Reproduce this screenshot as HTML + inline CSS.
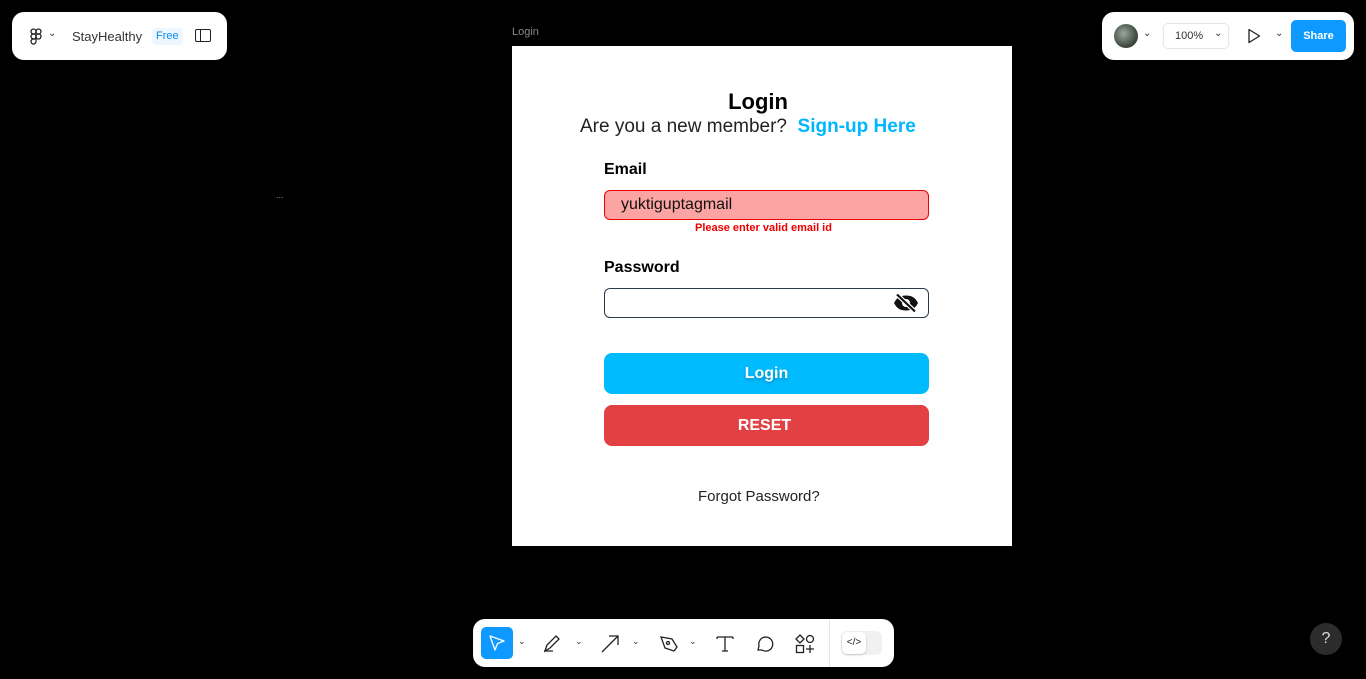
<!DOCTYPE html>
<html><head><meta charset="utf-8"><style>
*{margin:0;padding:0;box-sizing:border-box}
body{width:1366px;height:679px;background:#000;position:relative;overflow:hidden;font-family:"Liberation Sans",sans-serif}
.a{position:absolute}
.t{white-space:nowrap}
</style></head><body>
<div class="a" style="left:12px;top:12px;width:215px;height:48px;background:#fff;border-radius:12px"></div>
<svg class="a" style="left:30px;top:28px" width="12" height="17" viewBox="0 0 12 17" fill="none" stroke="#222" stroke-width="1.3"><rect x="1" y="1" width="5" height="5" rx="2.5"/><rect x="6" y="1" width="5" height="5" rx="2.5"/><rect x="1" y="6" width="5" height="5" rx="2.5"/><circle cx="8.5" cy="8.5" r="2.5"/><path d="M1 13.5a2.5 2.5 0 0 1 2.5-2.5H6v2.5a2.5 2.5 0 0 1-5 0z"/></svg>
<div class="a t" style="left:48px;top:28px;font-size:10px;color:#333">⌄</div>
<div class="a t" style="left:72px;top:29px;font-size:13px;color:#333">StayHealthy</div>
<div class="a t" style="left:152px;top:28px;height:17px;padding:0 4px;background:#eef6ff;border-radius:4px;font-size:11px;line-height:17px;color:#0d8ce9">Free</div>
<div class="a" style="left:195px;top:29px;width:16px;height:13px;border:1.3px solid #222;border-radius:2px"></div>
<div class="a" style="left:200px;top:29px;width:1.3px;height:13px;background:#222"></div>

<div class="a" style="left:1102px;top:12px;width:252px;height:48px;background:#fff;border-radius:12px"></div>
<div class="a" style="left:1114px;top:24px;width:24px;height:24px;border-radius:50%;background:radial-gradient(circle at 40% 40%,#9aa79a,#445044 60%,#222)"></div>
<div class="a t" style="left:1143px;top:28px;font-size:10px;color:#333">⌄</div>
<div class="a" style="left:1163px;top:23px;width:66px;height:26px;border:1px solid #e5e5e5;border-radius:5px"></div>
<div class="a t" style="left:1175px;top:30px;font-size:11px;color:#333">100%</div>
<div class="a t" style="left:1214px;top:28px;font-size:10px;color:#333">⌄</div>
<svg class="a" style="left:1247px;top:28px" width="14" height="16"><path d="M2 1.5L12.5 8L2 14.5Z" fill="none" stroke="#222" stroke-width="1.3" stroke-linejoin="round"/></svg>
<div class="a t" style="left:1275px;top:28px;font-size:10px;color:#333">⌄</div>
<div class="a t" style="left:1291px;top:20px;width:55px;height:32px;background:#0d99ff;border-radius:5px;color:#fff;font-size:11px;font-weight:bold;text-align:center;line-height:32px">Share</div>

<div class="a t" style="left:512px;top:26px;font-size:11px;color:#888">Login</div>
<div class="a t" style="left:276px;top:190px;font-size:9px;color:#999">...</div>
<div class="a" style="left:512px;top:46px;width:500px;height:500px;background:#fff"></div>
<div class="a t" style="left:512px;top:89px;width:492px;text-align:center;font-size:22px;font-weight:bold;color:#000">Login</div>
<div class="a t" style="left:580px;top:116px;font-size:19px;color:#222">Are you a new member?&nbsp; <span style="color:#00b7ff;font-weight:bold">Sign-up Here</span></div>
<div class="a t" style="left:604px;top:161px;font-size:16px;font-weight:bold;color:#000">Email</div>
<div class="a" style="left:604px;top:190px;width:325px;height:30px;background:#fca3a3;border:1.3px solid #e00;border-radius:6px"></div>
<div class="a t" style="left:621px;top:196px;font-size:16px;color:#111">yuktiguptagmail</div>
<div class="a t" style="left:695px;top:222px;font-size:11px;font-weight:bold;color:#e00">Please enter valid email id</div>
<div class="a t" style="left:604px;top:259px;font-size:16px;font-weight:bold;color:#000">Password</div>
<div class="a" style="left:604px;top:288px;width:325px;height:30px;border:1.2px solid #2a3a4a;border-radius:6px"></div>
<svg class="a" style="left:893px;top:293px" width="26" height="20" viewBox="0 0 26 20"><path d="M1 10C4 4 8 2.5 13 2.5s9 1.5 12 7.5c-3 6-7 7.5-12 7.5S4 16 1 10z" fill="#111"/><circle cx="13" cy="10" r="4" fill="#fff"/><circle cx="13" cy="10" r="2" fill="#111"/><path d="M4 1.5L22 18.5" stroke="#fff" stroke-width="4.5"/><path d="M4 1.5L22 18.5" stroke="#111" stroke-width="2.2"/></svg>
<div class="a" style="left:604px;top:353px;width:325px;height:41px;background:#00bcff;border-radius:8px"></div>
<div class="a t" style="left:604px;top:365px;width:325px;text-align:center;font-size:16px;font-weight:bold;color:#fff;text-shadow:0 2px 3px rgba(0,0,0,.25)">Login</div>
<div class="a" style="left:604px;top:405px;width:325px;height:41px;background:#e34043;border-radius:8px"></div>
<div class="a t" style="left:602px;top:417px;width:325px;text-align:center;font-size:16px;font-weight:bold;color:#fff">RESET</div>
<div class="a t" style="left:698px;top:488px;font-size:15px;color:#222">Forgot Password?</div>

<div class="a" style="left:473px;top:619px;width:421px;height:48px;background:#fff;border-radius:12px"></div>
<div class="a" style="left:481px;top:627px;width:32px;height:32px;background:#0d99ff;border-radius:5px"></div>
<svg class="a" style="left:488px;top:634px" width="18" height="18"><path d="M2 2L16 7L9.5 9.5L7 16Z" fill="none" stroke="#fff" stroke-width="1.3" stroke-linejoin="round"/></svg>
<div class="a t" style="left:518px;top:636px;font-size:9px;color:#333">⌄</div>
<svg class="a" style="left:543px;top:633px" width="22" height="20" fill="none" stroke="#222" stroke-width="1.3"><path d="M1 18h9M2 18l2-6 9-9 3 3-9 9z"/></svg>
<div class="a t" style="left:575px;top:636px;font-size:9px;color:#333">⌄</div>
<svg class="a" style="left:600px;top:634px" width="20" height="20" fill="none" stroke="#222" stroke-width="1.3"><path d="M2 18L18 2M9 2h9v9"/></svg>
<div class="a t" style="left:632px;top:636px;font-size:9px;color:#333">⌄</div>
<svg class="a" style="left:659px;top:634px" width="20" height="20" fill="none" stroke="#222" stroke-width="1.3"><path d="M2 3l11 2 5 8-3 4-9-3z"/><circle cx="9" cy="9" r="1.5"/></svg>
<div class="a t" style="left:689px;top:636px;font-size:9px;color:#333">⌄</div>
<svg class="a" style="left:716px;top:635px" width="18" height="17" fill="none" stroke="#222" stroke-width="1.3"><path d="M1 2h16M9 2v14M6 16h6M1 2v2M17 2v2"/></svg>
<svg class="a" style="left:755px;top:634px" width="20" height="18" fill="none" stroke="#222" stroke-width="1.3"><path d="M3 16l1-4a7 7 0 1 1 3 4z"/></svg>
<svg class="a" style="left:795px;top:634px" width="20" height="20" fill="none" stroke="#222" stroke-width="1.3"><path d="M5 1l4 4-4 4-4-4z"/><circle cx="15" cy="5" r="3.5"/><rect x="1.5" y="11.5" width="7" height="7"/><path d="M15 11v8M11 15h8"/></svg>
<div class="a" style="left:829px;top:619px;width:1px;height:48px;background:#e5e5e5"></div>
<div class="a" style="left:841px;top:631px;width:41px;height:24px;background:#f1f1f1;border-radius:6px"></div>
<div class="a t" style="left:842px;top:632px;width:24px;height:22px;background:#fff;border-radius:5px;box-shadow:0 1px 2px rgba(0,0,0,.2);font-size:10px;text-align:center;line-height:22px;color:#222">&lt;/&gt;</div>

<div class="a t" style="left:1310px;top:623px;width:32px;height:32px;border-radius:50%;background:#2c2c2c;color:#ddd;font-size:16px;text-align:center;line-height:32px">?</div>
</body></html>
